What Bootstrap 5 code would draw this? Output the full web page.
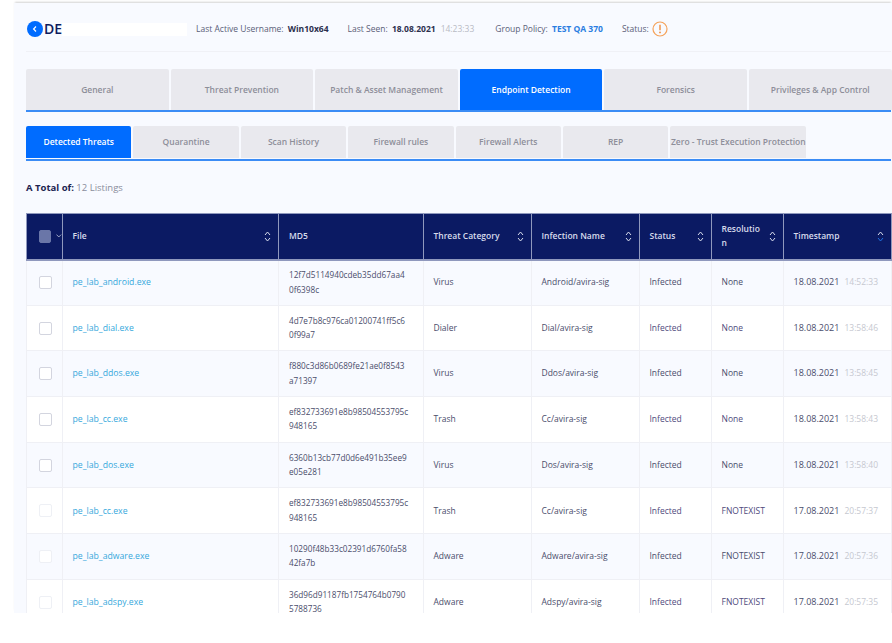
<!DOCTYPE html>
<html lang="en">
<head>
    <meta charset="UTF-8">
    <meta name="viewport" content="width=device-width, initial-scale=1.0">
    <title>Endpoint Detection</title>
    <link href="https://cdn.jsdelivr.net/npm/bootstrap@5.3.0/dist/css/bootstrap.min.css" rel="stylesheet">
    <style>
        body {
            background: #fff;
            font-family: "Open Sans", "Liberation Sans", sans-serif;
            font-size: 8.5px;
            color: #4a4d6b;
        }
        .app-panel {
            height: 610px;
            margin: 3px 0 0 14px;
            padding: 0 1px 0 12px;
            background: #f8faff;
            box-shadow: 0 -2px 2px -1px rgba(0, 0, 0, .18);
            overflow: hidden;
        }
        .head-bar {
            height: 49px;
            padding-top: 4px;
            border-bottom: 1px solid #f0f1f6;
        }
        .back-btn { width: 16px; height: 16px; margin: 0 1px; flex: none; }
        .host-name { width: 152px; font-size: 14px; line-height: 16px; font-weight: 600; color: #0d1b5e; flex: none; white-space: nowrap; display: flex; align-items: center; }
        .host-name span { width: 125px; height: 13px; background: #fff; flex: none; }
        .head-item { margin-right: 19px; color: #5b5e78; white-space: nowrap; }
        .head-item b { color: #2c2f4d; font-weight: 700; margin-left: 2px; }
        .head-item b.policy { color: #2a7de1; }
        .head-item i { color: #b9bbc4; font-style: normal; margin: 0 2px 0 5px; }
        .status-icon { width: 16px; height: 16px; margin-left: 3px; }
        .tab-strip {
            gap: 2px;
            flex-wrap: nowrap;
            border-bottom: 2px solid #3b8cf5;
        }
        .tab-strip .nav-link {
            background: #e9e9ee;
            color: #8d8e99;
            font-weight: 600;
            border-radius: 2px 2px 0 0;
            padding: 0;
            display: flex;
            align-items: center;
            justify-content: center;
            white-space: nowrap;
        }
        .tab-strip .nav-link.active { background: #006cff; color: #fff; }
        .main-tabs { margin-top: 17px; }
        .main-tabs .nav-link { width: 142.6px; height: 41px; font-size: 8.5px; padding-top: 1px; }
        .sub-tabs { margin-top: 14px; padding-bottom: 1px; }
        .sub-tabs .nav-link { width: 105.4px; height: 32px; font-size: 8.5px; padding-top: 1px; }
        .sub-tabs .nav-link.wide-tab { width: 136px; }
        .total-line { margin: 20px 0 19px; height: 13px; line-height: 13px; font-size: 9.5px; color: #8a8d9c; }
        .total-line b { color: #1d2450; }
        .threat-table {
            width: 865px;
            table-layout: fixed;
            margin: 0;
            font-size: 8.5px;
            --bs-table-bg: #fff;
            --bs-table-color: #4a4d6b;
            --bs-table-striped-bg: #f8faff;
            --bs-table-striped-color: #4a4d6b;
            --bs-table-border-color: #eff0f5;
        }
        .threat-table th {
            height: 46px;
            padding: 0 10px;
            background: #0b1a63;
            color: #d8dcec;
            font-weight: 600;
            border: 1px solid #8f98bd;
            border-width: 1px 1px 2px 1px;
            vertical-align: middle;
            box-shadow: none;
            line-height: 14.5px;
        }
        .threat-table td {
            height: 45.7px;
            padding: 0 10px;
            vertical-align: middle;
            line-height: 14.5px;
            border-width: 0 1px 1px 1px;
            white-space: nowrap;
        }
        .th-inner { display: flex; align-items: center; justify-content: space-between; }
        .sort-arrows { width: 7px; height: 13px; flex: none; margin-right: -3px; }
        .threat-table .check-cell { padding: 0 0 0 11.5px; }
        .threat-table .form-check-input {
            width: 13px;
            height: 13px;
            margin: 0;
            display: block;
            background-color: #fff;
            border: 1px solid #d3d5df;
            border-radius: 2px;
        }
        .threat-table .form-check-input.faded { border-color: #eef0f5; }
        .threat-table th .form-check-input { background-color: #6a76a8; border-color: #6a76a8; }
        .select-drop { width: 6px; height: 4px; margin-left: 5px; }
        .threat-table a { color: #36a8dc; text-decoration: none; font-size: 8.7px; }
        .cell-md5 { font-size: 8.2px; }
        .cell-date { font-size: 9px; }
        .cell-time { color: #c6c8d0; margin-left: 5px; font-size: 8.5px; }
        .cell-state { color: #4f4a7c; }
    </style>
</head>
<body>
    <div class="app-panel">
        <div class="head-bar d-flex align-items-center">
            <svg class="back-btn" viewBox="0 0 16 16"><circle cx="8" cy="8" r="8" fill="#006cff"/><path d="M9 5.5 6.6 8 9 10.5" fill="none" stroke="#fff" stroke-width="1.2"/></svg>
            <div class="host-name">DE<span></span></div>
            <div class="head-item">Last Active Username: <b>Win10x64</b></div>
            <div class="head-item">Last Seen: <b>18.08.2021</b><i>14:23:33</i></div>
            <div class="head-item">Group Policy: <b class="policy">TEST QA 370</b></div>
            <div class="d-flex align-items-center head-item">Status:
                <svg class="status-icon" viewBox="0 0 16 16"><circle cx="8" cy="8" r="7" fill="none" stroke="#f5a25a" stroke-width="1.2"/><path d="M8 3.8v5.4" stroke="#f08a3c" stroke-width="1.4"/><circle cx="8" cy="11.4" r=".9" fill="#f08a3c"/></svg>
            </div>
        </div>

        <ul class="nav tab-strip main-tabs">
            <li class="nav-item"><a class="nav-link" href="#">General</a></li>
            <li class="nav-item"><a class="nav-link" href="#">Threat Prevention</a></li>
            <li class="nav-item"><a class="nav-link" href="#">Patch &amp; Asset Management</a></li>
            <li class="nav-item"><a class="nav-link active" href="#">Endpoint Detection</a></li>
            <li class="nav-item"><a class="nav-link" href="#">Forensics</a></li>
            <li class="nav-item"><a class="nav-link" href="#">Privileges &amp; App Control</a></li>
        </ul>

        <ul class="nav tab-strip sub-tabs">
            <li class="nav-item"><a class="nav-link active" href="#">Detected Threats</a></li>
            <li class="nav-item"><a class="nav-link" href="#">Quarantine</a></li>
            <li class="nav-item"><a class="nav-link" href="#">Scan History</a></li>
            <li class="nav-item"><a class="nav-link" href="#">Firewall rules</a></li>
            <li class="nav-item"><a class="nav-link" href="#">Firewall Alerts</a></li>
            <li class="nav-item"><a class="nav-link" href="#">REP</a></li>
            <li class="nav-item"><a class="nav-link wide-tab" href="#">Zero - Trust Execution Protection</a></li>
        </ul>

        <div class="total-line"><b>A Total of:</b> 12 Listings</div>

        <table class="table table-striped table-bordered threat-table">
            <colgroup>
                <col style="width:35.5px"><col style="width:216.5px"><col style="width:144.5px"><col style="width:108px"><col style="width:108px"><col style="width:72px"><col style="width:72px"><col style="width:108.5px">
            </colgroup>
            <thead>
                <tr>
                    <th class="check-cell"><div class="d-flex align-items-center"><input class="form-check-input" type="checkbox" aria-label="Select all"><svg class="select-drop" viewBox="0 0 6 4"><path d="M.5.5 3 3 5.5.5" fill="none" stroke="#cfd4e6" stroke-width=".8"/></svg></div></th>
                    <th><div class="th-inner">File<svg class="sort-arrows" viewBox="0 0 7 13"><path d="M1 5 3.5 2 6 5M1 8l2.5 3L6 8" fill="none" stroke="#d8dcec"/></svg></div></th>
                    <th>MD5</th>
                    <th><div class="th-inner">Threat Category<svg class="sort-arrows" viewBox="0 0 7 13"><path d="M1 5 3.5 2 6 5M1 8l2.5 3L6 8" fill="none" stroke="#d8dcec"/></svg></div></th>
                    <th><div class="th-inner">Infection Name<svg class="sort-arrows" viewBox="0 0 7 13"><path d="M1 5 3.5 2 6 5M1 8l2.5 3L6 8" fill="none" stroke="#d8dcec"/></svg></div></th>
                    <th><div class="th-inner">Status<svg class="sort-arrows" viewBox="0 0 7 13"><path d="M1 5 3.5 2 6 5M1 8l2.5 3L6 8" fill="none" stroke="#d8dcec"/></svg></div></th>
                    <th><div class="th-inner"><span>Resolutio<br>n</span><svg class="sort-arrows" viewBox="0 0 7 13"><path d="M1 5 3.5 2 6 5M1 8l2.5 3L6 8" fill="none" stroke="#d8dcec"/></svg></div></th>
                    <th><div class="th-inner">Timestamp<svg class="sort-arrows" viewBox="0 0 7 13"><path d="M1 5 3.5 2 6 5" fill="none" stroke="#d8dcec"/><path d="M1 8l2.5 3L6 8" fill="none" stroke="#1f6fe0"/></svg></div></th>
                </tr>
            </thead>
            <tbody>
                <tr>
                    <td class="check-cell"><input class="form-check-input" type="checkbox" aria-label="Select row"></td>
                    <td><a href="#">pe_lab_android.exe</a></td>
                    <td class="cell-md5">12f7d5114940cdeb35dd67aa4<br>0f6398c</td>
                    <td>Virus</td><td>Android/avira-sig</td><td class="cell-state">Infected</td><td class="cell-state">None</td>
                    <td><span class="cell-date">18.08.2021</span><span class="cell-time">14:52:33</span></td>
                </tr>
                <tr>
                    <td class="check-cell"><input class="form-check-input" type="checkbox" aria-label="Select row"></td>
                    <td><a href="#">pe_lab_dial.exe</a></td>
                    <td class="cell-md5">4d7e7b8c976ca01200741ff5c6<br>0f99a7</td>
                    <td>Dialer</td><td>Dial/avira-sig</td><td class="cell-state">Infected</td><td class="cell-state">None</td>
                    <td><span class="cell-date">18.08.2021</span><span class="cell-time">13:58:46</span></td>
                </tr>
                <tr>
                    <td class="check-cell"><input class="form-check-input" type="checkbox" aria-label="Select row"></td>
                    <td><a href="#">pe_lab_ddos.exe</a></td>
                    <td class="cell-md5">f880c3d86b0689fe21ae0f8543<br>a71397</td>
                    <td>Virus</td><td>Ddos/avira-sig</td><td class="cell-state">Infected</td><td class="cell-state">None</td>
                    <td><span class="cell-date">18.08.2021</span><span class="cell-time">13:58:45</span></td>
                </tr>
                <tr>
                    <td class="check-cell"><input class="form-check-input" type="checkbox" aria-label="Select row"></td>
                    <td><a href="#">pe_lab_cc.exe</a></td>
                    <td class="cell-md5">ef832733691e8b98504553795c<br>948165</td>
                    <td>Trash</td><td>Cc/avira-sig</td><td class="cell-state">Infected</td><td class="cell-state">None</td>
                    <td><span class="cell-date">18.08.2021</span><span class="cell-time">13:58:43</span></td>
                </tr>
                <tr>
                    <td class="check-cell"><input class="form-check-input" type="checkbox" aria-label="Select row"></td>
                    <td><a href="#">pe_lab_dos.exe</a></td>
                    <td class="cell-md5">6360b13cb77d0d6e491b35ee9<br>e05e281</td>
                    <td>Virus</td><td>Dos/avira-sig</td><td class="cell-state">Infected</td><td class="cell-state">None</td>
                    <td><span class="cell-date">18.08.2021</span><span class="cell-time">13:58:40</span></td>
                </tr>
                <tr>
                    <td class="check-cell"><input class="form-check-input faded" type="checkbox" aria-label="Select row"></td>
                    <td><a href="#">pe_lab_cc.exe</a></td>
                    <td class="cell-md5">ef832733691e8b98504553795c<br>948165</td>
                    <td>Trash</td><td>Cc/avira-sig</td><td class="cell-state">Infected</td><td class="cell-state">FNOTEXIST</td>
                    <td><span class="cell-date">17.08.2021</span><span class="cell-time">20:57:37</span></td>
                </tr>
                <tr>
                    <td class="check-cell"><input class="form-check-input faded" type="checkbox" aria-label="Select row"></td>
                    <td><a href="#">pe_lab_adware.exe</a></td>
                    <td class="cell-md5">10290f48b33c02391d6760fa58<br>42fa7b</td>
                    <td>Adware</td><td>Adware/avira-sig</td><td class="cell-state">Infected</td><td class="cell-state">FNOTEXIST</td>
                    <td><span class="cell-date">17.08.2021</span><span class="cell-time">20:57:36</span></td>
                </tr>
                <tr>
                    <td class="check-cell"><input class="form-check-input faded" type="checkbox" aria-label="Select row"></td>
                    <td><a href="#">pe_lab_adspy.exe</a></td>
                    <td class="cell-md5">36d96d91187fb1754764b0790<br>5788736</td>
                    <td>Adware</td><td>Adspy/avira-sig</td><td class="cell-state">Infected</td><td class="cell-state">FNOTEXIST</td>
                    <td><span class="cell-date">17.08.2021</span><span class="cell-time">20:57:35</span></td>
                </tr>
            </tbody>
        </table>
    </div>
    <script src="https://cdn.jsdelivr.net/npm/bootstrap@5.3.0/dist/js/bootstrap.bundle.min.js"></script>
</body>
</html>
